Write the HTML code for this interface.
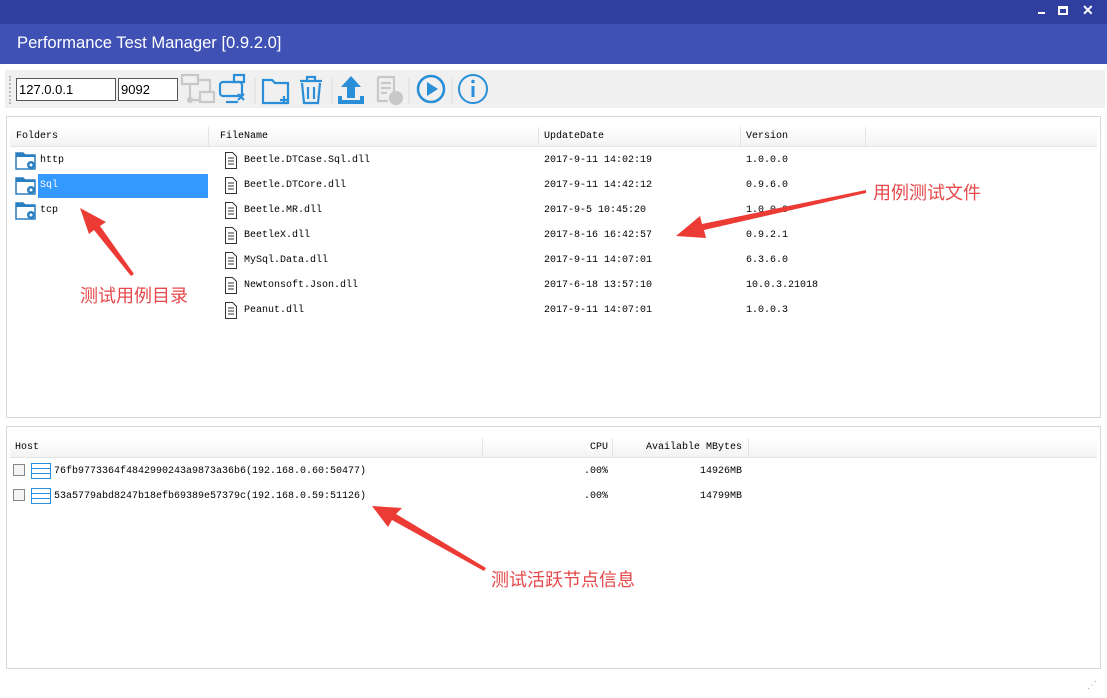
<!DOCTYPE html>
<html><head><meta charset="utf-8"><style>
*{margin:0;padding:0;box-sizing:border-box}
body{width:1107px;height:698px;overflow:hidden;background:#fff;font-family:"Liberation Mono","Noto Sans CJK SC",monospace;font-size:10px;color:#000;position:relative}
.a{position:absolute}
.m{font-family:"Liberation Mono",monospace;font-size:10px;white-space:nowrap}
.hd{background:linear-gradient(#fff,#f3f3f3);border-bottom:1px solid #e5e5e5}
.cn{font-family:"Noto Sans CJK SC",sans-serif;font-size:18px;color:#e5484a;white-space:nowrap;line-height:22px}
</style></head><body>
<div class="a" style="left:0;top:0;width:1107px;height:24px;background:#303f9f"></div>
<div class="a" style="left:1038px;top:12px;width:7px;height:2px;background:#fff"></div>
<div class="a" style="left:1058px;top:6px;width:10px;height:9px;border:2px solid #fff;border-top-width:3px"></div>
<div class="a" style="left:1082px;top:2px;color:#fff;font:bold 14px 'Liberation Sans'">✕</div>
<div class="a" style="left:0;top:24px;width:1107px;height:40px;background:#3f51b5"></div>
<div class="a" style="left:17px;top:33px;color:#fff;font:16.6px 'Liberation Sans',sans-serif">Performance Test Manager [0.9.2.0]</div>
<div class="a" style="left:5px;top:70px;width:1100px;height:38px;background:#f0f0f0"></div>
<div class="a" style="left:9px;top:76px;width:1px;height:28px;border-left:2px dotted #bbb"></div>
<div class="a" style="left:16px;top:78px;width:100px;height:23px;border:1px solid #555;background:#fff;font:13px 'Liberation Sans';padding:3px 2px">127.0.0.1</div>
<div class="a" style="left:118px;top:78px;width:60px;height:23px;border:1px solid #555;background:#fff;font:13px 'Liberation Sans';padding:3px 2px">9092</div>
<svg class="a" style="left:180px;top:72px" width="320" height="36" fill="none" stroke-width="2.2">
<g stroke="#c8c8c8"><rect x="2" y="3" width="16" height="9"/><rect x="20" y="20" width="14" height="10"/><path d="M10 12v16h10M18 8h12v12"/><circle cx="10" cy="28" r="2"/></g>
<g stroke="#2a8fd8"><rect x="40" y="10" width="22" height="14" rx="3"/><path d="M46 30h12"/><rect x="54" y="3" width="10" height="7"/><path d="M58 22l6 6M64 22l-6 6"/></g>
<path d="M75 6v26" stroke="#ddd" stroke-width="1"/>
<g stroke="#2a8fd8"><path d="M83 8h9l3 3h13v20H83z"/><path d="M104 24v7M100 28h8"/></g>
<g stroke="#2a8fd8"><path d="M120 9h22M127 9V5h8v4M122 11l2 20h14l2-20M128 15v12M134 15v12"/></g>
<path d="M152 6v26" stroke="#ddd" stroke-width="1"/>
<g fill="#2a8fd8" stroke="none"><path d="M171 4l-10 11h6v11h8V15h6z"/><path d="M158 24h4v4h18v-4h4v8h-26z"/></g>
<g stroke="#c8c8c8"><path d="M198 5h16v16M198 5v24h10M201 11h10M201 16h10M201 21h6"/><circle cx="216" cy="26" r="6" fill="#c8c8c8"/></g>
<path d="M229 6v26" stroke="#ddd" stroke-width="1"/>
<circle cx="251" cy="17" r="13" stroke="#2a8fd8" stroke-width="2.6"/><path d="M247 10v14l11-7z" fill="#2a8fd8"/>
<path d="M272 6v26" stroke="#ddd" stroke-width="1"/>
<circle cx="293" cy="17" r="14" stroke="#2a8fd8" stroke-width="2"/><path d="M293 14v11" stroke="#2a8fd8" stroke-width="3"/><circle cx="293" cy="9.5" r="1.8" fill="#2a8fd8"/>
</svg>
<!-- panel 1 -->
<div class="a" style="left:6px;top:116px;width:1095px;height:302px;border:1px solid #d8d8d8;background:#fff"></div>
<div class="a hd" style="left:10px;top:127px;width:1087px;height:20px"></div>
<div class="a" style="left:208px;top:127px;width:1px;height:20px;background:#e4e4e4"></div>
<div class="a" style="left:538px;top:127px;width:1px;height:20px;background:#e4e4e4"></div>
<div class="a" style="left:740px;top:127px;width:1px;height:20px;background:#e4e4e4"></div>
<div class="a" style="left:865px;top:127px;width:1px;height:20px;background:#e4e4e4"></div>
<div class="a m" style="left:16px;top:131px">Folders</div>
<div class="a m" style="left:220px;top:131px">FileName</div>
<div class="a m" style="left:544px;top:131px">UpdateDate</div>
<div class="a m" style="left:746px;top:131px">Version</div>
<div class="a" style="left:38px;top:174px;width:170px;height:24px;background:#3399ff"></div>
<svg class="a" style="left:15px;top:150px" width="22" height="75">
<g id="f"><path d="M1 3h7l2 2h10v14H1z" fill="#fff" stroke="#2a7fc0" stroke-width="1.5"/><path d="M1 3h7l2 2h10v2H1z" fill="#2a7fc0"/><circle cx="16" cy="15" r="4" fill="#2a7fc0"/><circle cx="16" cy="15" r="1.5" fill="#fff"/></g>
<use href="#f" y="25"/><use href="#f" y="50"/>
</svg>
<div class="a m" style="left:40px;top:155px">http</div>
<div class="a m" style="left:40px;top:180px;color:#fff">Sql</div>
<div class="a m" style="left:40px;top:205px">tcp</div>
<svg class="a" style="left:224px;top:151px" width="14" height="175" fill="#fff" stroke="#333" stroke-width="1">
<g id="d"><path d="M1.5 1.5h7l4 4v12h-11z"/><path d="M4 7h6M4 10h6M4 13h6"/></g>
<use href="#d" y="25"/><use href="#d" y="50"/><use href="#d" y="75"/><use href="#d" y="100"/><use href="#d" y="125"/><use href="#d" y="150"/>
</svg>
<div class="a m" style="left:244px;top:148px;line-height:25px">Beetle.DTCase.Sql.dll<br>Beetle.DTCore.dll<br>Beetle.MR.dll<br>BeetleX.dll<br>MySql.Data.dll<br>Newtonsoft.Json.dll<br>Peanut.dll</div>
<div class="a m" style="left:544px;top:148px;line-height:25px">2017-9-11 14:02:19<br>2017-9-11 14:42:12<br>2017-9-5 10:45:20<br>2017-8-16 16:42:57<br>2017-9-11 14:07:01<br>2017-6-18 13:57:10<br>2017-9-11 14:07:01</div>
<div class="a m" style="left:746px;top:148px;line-height:25px">1.0.0.0<br>0.9.6.0<br>1.0.0.0<br>0.9.2.1<br>6.3.6.0<br>10.0.3.21018<br>1.0.0.3</div>
<!-- panel 2 -->
<div class="a" style="left:6px;top:426px;width:1095px;height:243px;border:1px solid #d8d8d8;background:#fff"></div>
<div class="a hd" style="left:10px;top:438px;width:1087px;height:20px"></div>
<div class="a" style="left:482px;top:438px;width:1px;height:20px;background:#e4e4e4"></div>
<div class="a" style="left:612px;top:438px;width:1px;height:20px;background:#e4e4e4"></div>
<div class="a" style="left:748px;top:438px;width:1px;height:20px;background:#e4e4e4"></div>
<div class="a m" style="left:15px;top:442px">Host</div>
<div class="a m" style="left:482px;top:442px;width:126px;text-align:right">CPU</div>
<div class="a m" style="left:612px;top:442px;width:130px;text-align:right">Available MBytes</div>
<svg class="a" style="left:12px;top:462px" width="40" height="45">
<g id="h"><rect x="1.5" y="2.5" width="11" height="11" fill="#f4f4f4" stroke="#888"/><rect x="19.5" y="1.5" width="19" height="15" fill="#fff" stroke="#2a8fd8"/><path d="M20 6.5h18M20 11.5h18" stroke="#2a8fd8"/></g>
<use href="#h" y="25"/>
</svg>
<div class="a m" style="left:54px;top:459px;line-height:25px">76fb9773364f4842990243a9873a36b6(192.168.0.60:50477)<br>53a5779abd8247b18efb69389e57379c(192.168.0.59:51126)</div>
<div class="a m" style="left:560px;top:459px;width:48px;text-align:right;line-height:25px">.00%<br>.00%</div>
<div class="a m" style="left:660px;top:459px;width:82px;text-align:right;line-height:25px">14926MB<br>14799MB</div>
<!-- arrows -->
<svg class="a" style="left:0;top:0" width="1107" height="698">
<g fill="#ec3b35">
<path d="M80 208 L106 222 L100 226 L134 274 L131 276 L94 230 L89 234 Z"/>
<path d="M676 236 L700 216 L702 224 L866 190 L866 193 L704 230 L706 238 Z"/>
<path d="M372 506 L402 508 L396 514 L486 568 L484 571 L392 520 L388 527 Z"/>
</g></svg>
<div class="a cn" style="left:80px;top:284px">测试用例目录</div>
<div class="a cn" style="left:873px;top:181px">用例测试文件</div>
<div class="a cn" style="left:491px;top:568px">测试活跃节点信息</div>
<div class="a" style="left:1087px;top:680px;color:#aaa;font-size:10px">⋰</div>
</body></html>
